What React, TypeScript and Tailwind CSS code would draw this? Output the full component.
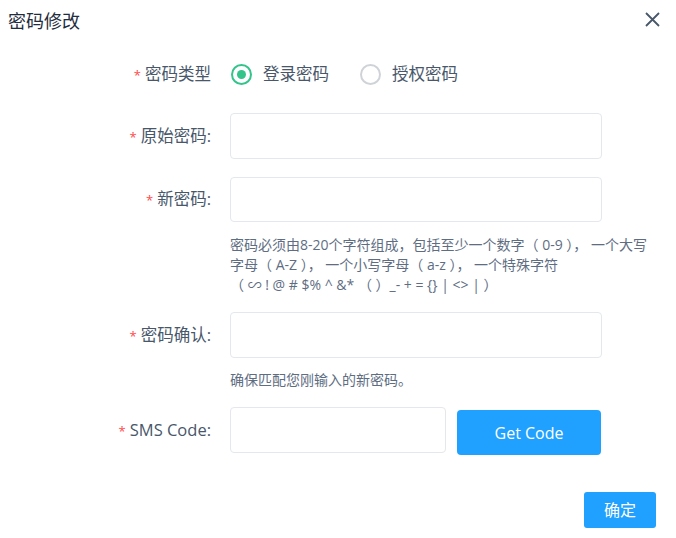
import { useState } from 'react';

const font = { fontFamily: '"Open Sans", "Noto Sans CJK SC", sans-serif' };

function Label({ text }: { text: string }) {
  return (
    <div className="w-[213px] shrink-0 pr-[2px] text-right text-[16.5px] text-[#48576a]">
      <span className="mr-[4px] text-[13px] text-[#ff4949]">*</span>
      {text}
    </div>
  );
}

function Radio({ checked, label, onClick }: { checked: boolean; label: string; onClick: () => void }) {
  return (
    <button type="button" onClick={onClick} className="flex items-center gap-[11px] text-[16.5px] text-[#48576a]">
      <span
        className={`flex h-[21px] w-[21px] items-center justify-center rounded-full border-2 ${
          checked ? 'border-[#33c48b]' : 'border-[#cfd3d8]'
        } bg-white`}
      >
        {checked && <span className="h-[9px] w-[9px] rounded-full bg-[#33c48b]" />}
      </span>
      {label}
    </button>
  );
}

const rules = [
  '密码必须由8-20个字符组成，包括至少一个数字（ 0-9 ）， 一个大写',
  '字母（ A-Z ）， 一个小写字母（ a-z ）， 一个特殊字符',
  '（ ∽ ! @ # $% ^ &* （ ）_- + = {} | <> | ）',
];

export default function App() {
  const [kind, setKind] = useState('login');

  return (
    <div style={font} className="h-[538px] w-[676px] bg-white relative">
      <div className="flex items-start justify-between pl-[8px] pr-[16px] pt-[8px]">
        <h1 className="text-[18px] text-[#1f2d3d]">密码修改</h1>
        <button type="button" className="mt-[4px] text-[#48576a]" aria-label="close">
          <svg width="15" height="15" viewBox="0 0 15 15">
            <path d="M1 1L14 14M14 1L1 14" stroke="currentColor" strokeWidth="1.8" />
          </svg>
        </button>
      </div>

      <div className="flex flex-col pt-[27px]">
        <div className="flex h-[24px] items-center">
          <Label text="密码类型" />
          <div className="ml-[18px] flex items-center gap-[31px]">
            <Radio checked={kind === 'login'} label="登录密码" onClick={() => setKind('login')} />
            <Radio checked={kind === 'auth'} label="授权密码" onClick={() => setKind('auth')} />
          </div>
        </div>

        <div className="mt-[27px] flex items-center">
          <Label text="原始密码:" />
          <input type="password" className="ml-[17px] h-[46px] w-[372px] rounded-[4px] border border-[#e4e7ec] outline-none" />
        </div>

        <div className="mt-[18px] flex items-center">
          <Label text="新密码:" />
          <input type="password" className="ml-[17px] h-[45px] w-[372px] rounded-[4px] border border-[#e4e7ec] outline-none" />
        </div>
        <div className="ml-[230px] mt-[13px] text-[14px] leading-[20px] text-[#5e6d82]">
          {rules.map((line) => (
            <p key={line} className="whitespace-pre">
              {line}
            </p>
          ))}
        </div>

        <div className="mt-[17px] flex items-center">
          <Label text="密码确认:" />
          <input type="password" className="ml-[17px] h-[46px] w-[372px] rounded-[4px] border border-[#e4e7ec] outline-none" />
        </div>
        <p className="ml-[230px] mt-[12px] text-[14px] leading-[20px] text-[#5e6d82]">确保匹配您刚输入的新密码。</p>

        <div className="mt-[15px] flex items-center">
          <Label text="SMS Code:" />
          <input type="text" className="ml-[17px] h-[46px] w-[216px] rounded-[4px] border border-[#e4e7ec] outline-none" />
          <button
            type="button"
            className="ml-[11px] mt-[5px] h-[45px] w-[144px] rounded-[4px] bg-[#20a0ff] text-[16px] text-white"
          >
            Get Code
          </button>
        </div>

        <div className="mt-[37px] flex justify-end pr-[20px]">
          <button type="button" className="h-[36px] w-[72px] rounded-[3px] bg-[#20a0ff] text-[16px] text-white">
            确定
          </button>
        </div>
      </div>
    </div>
  );
}
